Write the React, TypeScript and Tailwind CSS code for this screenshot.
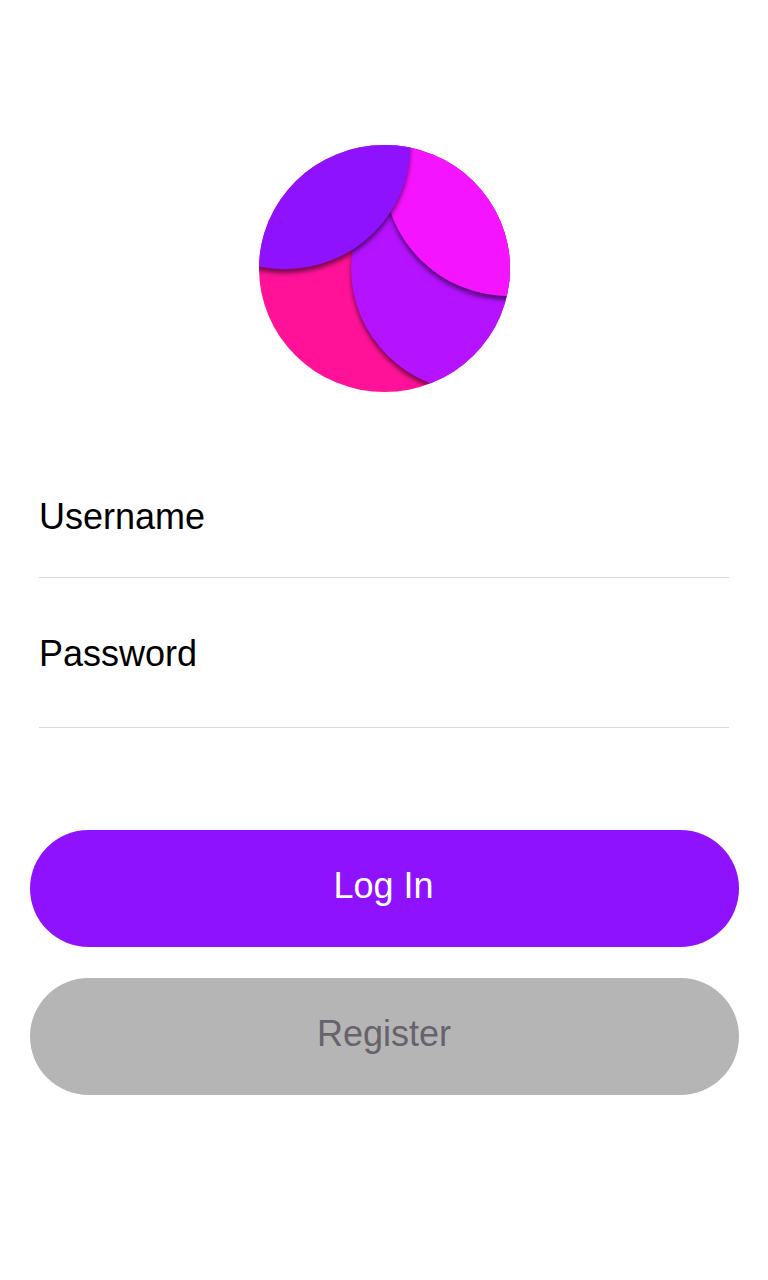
function Logo() {
  return (
    <svg className="block" width="251" height="247" viewBox="259 145 251 247" role="img" aria-label="Logo">
      <defs>
        <clipPath id="disc">
          <ellipse cx="384.5" cy="268.5" rx="125.5" ry="123.5" />
        </clipPath>
        <filter id="shade" x="-10%" y="-10%" width="120%" height="120%" colorInterpolationFilters="sRGB">
          <feDropShadow dx="0" dy="4" stdDeviation="2" floodColor="#000" floodOpacity="0.5" />
        </filter>
      </defs>
      <g clipPath="url(#disc)">
        <rect x="259" y="145" width="251" height="247" fill="#ff1297" />
        <ellipse cx="476.5" cy="268.5" rx="125.5" ry="123.5" fill="#b512ff" filter="url(#shade)" />
        <ellipse cx="509.5" cy="172.7" rx="125.5" ry="123.5" fill="#f514ff" filter="url(#shade)" />
        <ellipse cx="284.7" cy="145.7" rx="125.5" ry="123.5" fill="#8f12ff" filter="url(#shade)" />
      </g>
    </svg>
  );
}

export default function App() {
  return (
    <main className="flex h-[1280px] w-[768px] flex-col bg-white pt-[145px] font-['Liberation_Sans',sans-serif] text-[36px] leading-[42px]">
      <div className="pl-[259px]">
        <Logo />
      </div>
      <form className="flex flex-col">
        <div className="mx-[39px] flex h-[186px] flex-col justify-end border-b border-[#d9d9d9] pb-[39px] text-black">
          <span>Username</span>
        </div>
        <div className="mx-[39px] flex h-[150px] flex-col justify-end border-b border-[#d9d9d9] pb-[52px] text-black">
          <span>Password</span>
        </div>
        <div className="mt-[102px] ml-[30px] flex w-[709px] flex-col gap-[31px]">
          <button type="button" className="h-[117px] rounded-full bg-[#8f12ff] pr-[2px] pb-[5px] text-white">
            Log In
          </button>
          <button type="button" className="h-[117px] rounded-full bg-[#b5b5b5] pr-px pb-[5px] text-[#67626b]">
            Register
          </button>
        </div>
      </form>
    </main>
  );
}
